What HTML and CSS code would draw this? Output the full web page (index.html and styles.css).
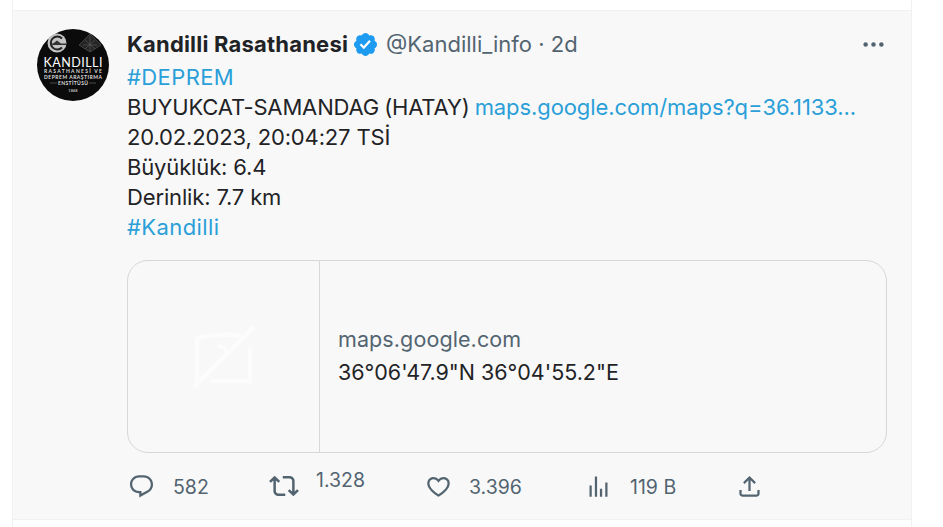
FILE: index.html
```html
<!DOCTYPE html>
<html lang="tr">
<head>
<meta charset="utf-8">
<title>Kandilli Rasathanesi</title>
<link rel="stylesheet" href="styles.css">
</head>
<body>
<main class="column">
  <article class="tweet">
    <div class="avatar">
      <svg viewBox="0 0 72 72" width="72" height="72">
        <circle cx="36" cy="36" r="36" fill="#0b0b0b"/>
        <circle cx="20" cy="14" r="9.5" fill="#c4c4c4"/>
        <path d="M25 9.5a6.5 6.5 0 1 0 0 9" fill="none" stroke="#222" stroke-width="2"/>
        <path d="M16 14.5l4-3 4 3h6v1.5H14v-1.5z" fill="#333"/>
        <path d="M53 5l11 11-11 7-11-7z" fill="#242424" stroke="#4c4c4c" stroke-width=".8"/>
        <path d="M53 7v15M46 16h14M48 11l10 9M58 11l-10 9" stroke="#5e5e5e" stroke-width=".6" fill="none"/>
        <text class="av-title" x="36" y="37.5" text-anchor="middle" textLength="59">KANDILLI</text>
        <text class="av-sub" x="36" y="43.7" text-anchor="middle" textLength="58">RASATHANESİ VE</text>
        <text class="av-sub" x="36" y="49.7" text-anchor="middle" textLength="58">DEPREM ARAŞTIRMA</text>
        <text class="av-sub" x="36" y="56" text-anchor="middle" textLength="30">ENSTİTÜSÜ</text>
        <path d="M13 54h7M52 54h7" stroke="#888" stroke-width=".5"/>
        <text class="av-year" x="36" y="62.5" text-anchor="middle">1868</text>
      </svg>
    </div>
    <div class="body">
      <header class="head">
        <strong class="name">Kandilli Rasathanesi</strong>
        <svg class="badge" viewBox="0 0 22 22" width="27" height="27">
          <path fill="#1d9bf0" d="M20.396 11c-.018-.646-.215-1.275-.57-1.816-.354-.54-.852-.972-1.438-1.246.223-.607.27-1.264.14-1.897-.131-.634-.437-1.218-.882-1.687-.47-.445-1.053-.75-1.687-.882-.633-.13-1.29-.083-1.897.14-.273-.587-.704-1.086-1.245-1.44S11.647 1.62 11 1.604c-.646.017-1.273.213-1.813.568s-.969.854-1.24 1.44c-.608-.223-1.267-.272-1.902-.14-.635.13-1.22.436-1.69.882-.445.47-.749 1.055-.878 1.688-.13.633-.08 1.29.144 1.896-.587.274-1.087.705-1.443 1.245-.356.54-.555 1.17-.574 1.817.02.647.218 1.276.574 1.817.356.54.856.972 1.443 1.245-.224.606-.274 1.263-.144 1.896.13.634.433 1.218.877 1.688.47.443 1.054.747 1.687.878.633.132 1.29.084 1.897-.136.274.586.705 1.084 1.246 1.439.54.354 1.17.551 1.816.569.647-.016 1.276-.213 1.817-.567s.972-.854 1.245-1.44c.604.239 1.266.296 1.903.164.636-.132 1.22-.447 1.68-.907.46-.46.776-1.044.908-1.681s.075-1.299-.165-1.903c.586-.274 1.084-.705 1.439-1.246.354-.54.551-1.17.569-1.816z"/>
          <path fill="#fff" d="M9.662 14.85l-3.429-3.428 1.293-1.302 2.072 2.072 4.4-4.794 1.347 1.246z"/>
        </svg>
        <span class="meta">@Kandilli_info · 2d</span>
        <svg class="more" viewBox="0 0 24 24" width="27" height="27">
          <circle cx="5" cy="12" r="2" fill="#536471"/>
          <circle cx="12" cy="12" r="2" fill="#536471"/>
          <circle cx="19" cy="12" r="2" fill="#536471"/>
        </svg>
      </header>
      <div class="text">
        <div><a class="link tag">#DEPREM</a></div>
        <div class="tight">BUYUKCAT-SAMANDAG (HATAY) <a class="link">maps.google.com/maps?q=36.1133...</a></div>
        <div>20.02.2023, 20:04:27 TSİ</div>
        <div>Büyüklük: 6.4</div>
        <div>Derinlik: 7.7 km</div>
        <div><a class="link tag">#Kandilli</a></div>
      </div>
      <section class="card">
        <div class="thumb">
          <svg viewBox="0 0 64 64" width="64" height="64" fill="none" stroke="#fcfcfc" stroke-width="4.5">
            <path d="M5 58V14c5-3 30-6 44-3"/>
            <path d="M58 22v34H18"/>
            <path d="M2 62L62 2"/>
            <path d="M26 22c6-2 10 2 8 8"/>
          </svg>
        </div>
        <div class="card-text">
          <div class="domain">maps.google.com</div>
          <div class="coords">36°06'47.9"N 36°04'55.2"E</div>
        </div>
      </section>
      <footer class="actions">
        <div class="action a-reply">
          <svg viewBox="0 0 24 24" width="27" height="27"><path fill="#536471" d="M1.751 10c0-4.42 3.584-8 8.005-8h4.366c4.49 0 8.129 3.64 8.129 8.13 0 2.96-1.607 5.68-4.196 7.11l-8.054 4.46v-3.69h-.067c-4.49.1-8.183-3.51-8.183-8.01zm8.005-6c-3.317 0-6.005 2.69-6.005 6 0 3.37 2.77 6.08 6.138 6.01l.351-.01h1.761v2.3l5.087-2.81c1.951-1.08 3.163-3.13 3.163-5.36 0-3.39-2.744-6.13-6.129-6.13H9.756z"/></svg>
          <span class="count">582</span>
        </div>
        <div class="action a-rt">
          <svg viewBox="0 0 24 24" width="30" height="30"><path fill="#536471" d="M4.5 3.88l4.432 4.14-1.364 1.46L5.5 7.55V16c0 1.1.896 2 2 2H13v2H7.5c-2.209 0-4-1.79-4-4V7.55L1.432 9.48.068 8.02 4.5 3.88zM16.5 6H11V4h5.5c2.209 0 4 1.79 4 4v8.45l2.068-1.93 1.364 1.46-4.432 4.14-4.432-4.14 1.364-1.46 2.068 1.93V8c0-1.1-.896-2-2-2z"/></svg>
          <span class="count raised">1.328</span>
        </div>
        <div class="action a-like">
          <svg viewBox="0 0 24 24" width="27" height="27"><path fill="#536471" d="M16.697 5.5c-1.222-.06-2.679.51-3.89 2.16l-.805 1.09-.806-1.09C9.984 6.01 8.526 5.44 7.304 5.5c-1.243.07-2.349.78-2.91 1.91-.552 1.12-.633 2.78.479 4.82 1.074 1.97 3.257 4.27 7.129 6.61 3.87-2.34 6.052-4.64 7.126-6.61 1.111-2.04 1.03-3.7.477-4.82-.561-1.13-1.666-1.84-2.908-1.91zm4.187 7.69c-1.351 2.48-4.001 5.12-8.379 7.67l-.503.3-.504-.3c-4.379-2.55-7.029-5.19-8.382-7.67-1.36-2.5-1.41-4.86-.514-6.67.887-1.79 2.647-2.91 4.601-3.01 1.651-.09 3.368.56 4.798 2.01 1.429-1.45 3.146-2.1 4.796-2.01 1.954.1 3.714 1.22 4.601 3.01.896 1.81.846 4.17-.514 6.67z"/></svg>
          <span class="count">3.396</span>
        </div>
        <div class="action a-views">
          <svg viewBox="0 0 24 24" width="27" height="27"><path fill="#536471" d="M8.75 21V3h2v18h-2zM18 21V8.5h2V21h-2zM4 21l.004-10h2L6 21H4zm9.248 0v-7h2v7h-2z"/></svg>
          <span class="count">119 B</span>
        </div>
        <div class="action a-share">
          <svg viewBox="0 0 24 24" width="27" height="27"><path fill="#536471" d="M12 2.59l5.7 5.7-1.41 1.42L13 6.41V16h-2V6.41l-3.3 3.3-1.41-1.42L12 2.59zM21 15l-.02 3.51c0 1.38-1.12 2.49-2.5 2.49H5.5C4.11 21 3 19.88 3 18.5V15h2v3.5c0 .28.22.5.5.5h12.98c.28 0 .5-.22.5-.5L19 15h2z"/></svg>
        </div>
      </footer>
    </div>
  </article>
</main>
</body>
</html>
```
FILE: styles.css
```css
html, body {
  margin: 0;
  padding: 0;
  background: #fff;
  overflow: hidden;
}
body {
  height: 527px;
  font-family: "Inter", "Open Sans", sans-serif;
  color: #1f2326;
}
.column {
  box-sizing: border-box;
  width: 900px;
  height: 527px;
  margin-left: 12px;
  padding-top: 10px;
  border-left: 1px solid #eff1f2;
  border-right: 1px solid #eff1f2;
}
.tweet {
  display: flex;
  box-sizing: border-box;
  height: 510px;
  gap: 18px;
  padding: 18px 24px 0 24px;
  background: #f8f8f8;
  border-top: 1px solid #eff1f2;
  border-bottom: 1px solid #eff1f2;
}
.avatar {
  flex: 0 0 72px;
  width: 72px;
  height: 72px;
}
.avatar svg { display: block; }
.av-title { font: 400 12.5px "Lato", sans-serif; fill: #fff; }
.av-sub { font: 700 5px "Lato", sans-serif; fill: #ddd; }
.av-year { font: 700 4px "Lato", sans-serif; fill: #bbb; }
.body { flex: 1; min-width: 0; }
.head {
  display: flex;
  align-items: center;
  height: 30px;
}
.name {
  font-size: 22px;
  font-weight: 700;
  letter-spacing: 0.2px;
  white-space: nowrap;
}
.badge { margin-left: 4px; }
.meta {
  margin-left: 7px;
  font-size: 22px;
  color: #536471;
  white-space: nowrap;
}
.more { margin-left: auto; }
.text {
  font-size: 22px;
  line-height: 30px;
  letter-spacing: -0.15px;
  padding-top: 3px;
  white-space: nowrap;
}
.tight { word-spacing: -1px; }
.link { color: #2a9fd8; letter-spacing: -0.09px; }
.tag { letter-spacing: 0.4px; }
.card {
  display: flex;
  box-sizing: border-box;
  height: 193px;
  margin-top: 18px;
  border: 1px solid #d4d8da;
  border-radius: 21px;
  overflow: hidden;
}
.thumb {
  flex: 0 0 191px;
  display: flex;
  align-items: center;
  justify-content: center;
  border-right: 1px solid #d4d8da;
}
.card-text {
  display: flex;
  flex-direction: column;
  justify-content: center;
  padding-left: 18px;
  font-size: 21.5px;
  line-height: 32px;
  letter-spacing: -0.03px;
}
.domain { color: #536471; margin-top: -2px; padding-bottom: 1px; letter-spacing: 0.1px; }
.actions {
  display: flex;
  align-items: center;
  height: 66px;
}
.action {
  display: flex;
  align-items: center;
  color: #536471;
  font-size: 19.5px;
}
.count { padding-top: 2px; }
.a-reply { width: 141px; padding-left: 1px; gap: 18px; box-sizing: border-box; }
.a-rt { width: 157px; padding-left: 1px; gap: 17px; box-sizing: border-box; }
.a-like { width: 161px; gap: 17px; }
.a-views { width: 151px; gap: 18px; margin-left: -1px; }
.raised { margin-bottom: 15px; }
```
